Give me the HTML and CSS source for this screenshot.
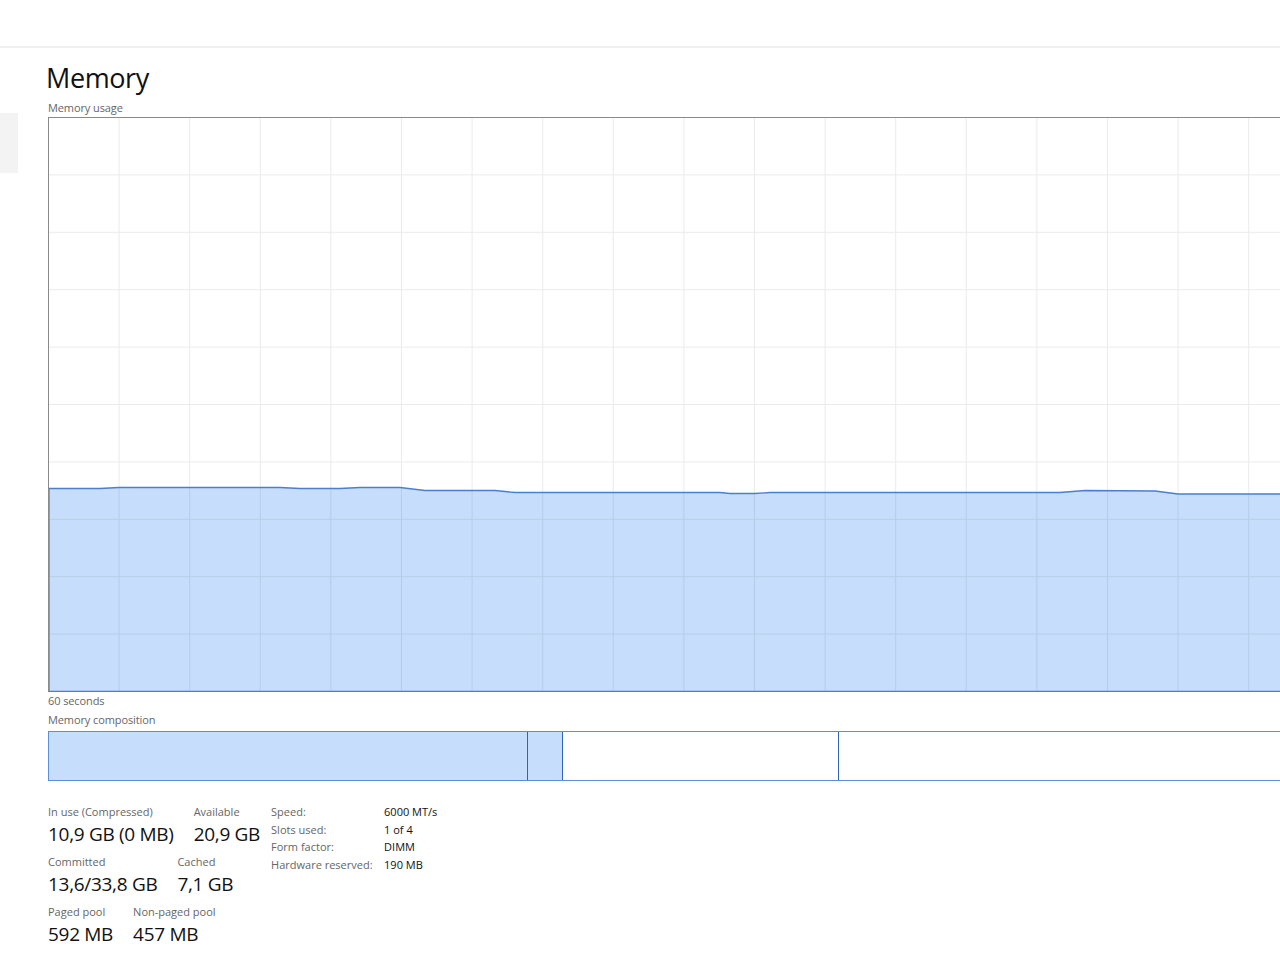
FILE: index.html
```html
<!DOCTYPE html>
<html lang="en">
<head>
    <meta charset="UTF-8">
    <title>Task Manager - Memory</title>
    <link rel="stylesheet" href="styles.css">
</head>
<body>
    <div class="titlebar"></div>

    <div class="layout">
        <!-- Barra lateral -->
        <div class="sidebar">
            <div class="side-item"></div>
        </div>

        <!-- Panel de memoria -->
        <div class="panel">
            <h1>Memory</h1>
            <div class="caption">Memory usage</div>

            <div class="chart">
                <svg width="1231" height="574" viewBox="0 0 1231 574">
                    <defs>
                        <pattern id="grid" x="0" y="0" width="70.6" height="57.4" patternUnits="userSpaceOnUse">
                            <path d="M70.1 0V57.4M0 56.9H70.6" fill="none" stroke="rgba(0,0,0,0.08)" stroke-width="1"/>
                        </pattern>
                    </defs>
                    <path class="area" d="M0 574V370.5L51 370.5L70 369.5L231 369.5L251 370.5L291 370.5L311 369.5L351 369.5L376 372.5L446 372.5L466 374.5L671 374.5L681 375.5L706 375.5L721 374.5L1011 374.5L1036 372.5L1106 373L1129 376L1231 376V574Z"/>
                    <rect width="1231" height="574" fill="url(#grid)"/>
                    <path class="line" d="M0 574V370.5L51 370.5L70 369.5L231 369.5L251 370.5L291 370.5L311 369.5L351 369.5L376 372.5L446 372.5L466 374.5L671 374.5L681 375.5L706 375.5L721 374.5L1011 374.5L1036 372.5L1106 373L1129 376L1231 376"/>
                    <path class="line" d="M0 573.5H1231"/>
                </svg>
            </div>
            <div class="caption small-gap">60 seconds</div>
            <div class="caption">Memory composition</div>

            <div class="composition">
                <div class="seg seg-inuse"></div>
                <div class="seg seg-modified"></div>
                <div class="seg seg-standby"></div>
                <div class="seg seg-free"></div>
            </div>

            <div class="stats">
                <div class="stat-cols">
                    <div class="stat-row">
                        <div class="stat">
                            <div class="stat-label">In use (Compressed)</div>
                            <div class="stat-value">10,9 GB (0 MB)</div>
                        </div>
                        <div class="stat">
                            <div class="stat-label">Available</div>
                            <div class="stat-value">20,9 GB</div>
                        </div>
                    </div>
                    <div class="stat-row">
                        <div class="stat">
                            <div class="stat-label">Committed</div>
                            <div class="stat-value">13,6/33,8 GB</div>
                        </div>
                        <div class="stat">
                            <div class="stat-label">Cached</div>
                            <div class="stat-value">7,1 GB</div>
                        </div>
                    </div>
                    <div class="stat-row">
                        <div class="stat">
                            <div class="stat-label">Paged pool</div>
                            <div class="stat-value">592 MB</div>
                        </div>
                        <div class="stat">
                            <div class="stat-label">Non-paged pool</div>
                            <div class="stat-value">457 MB</div>
                        </div>
                    </div>
                </div>

                <div class="specs">
                    <div class="spec-key">Speed:</div><div class="spec-val">6000 MT/s</div>
                    <div class="spec-key">Slots used:</div><div class="spec-val">1 of 4</div>
                    <div class="spec-key">Form factor:</div><div class="spec-val">DIMM</div>
                    <div class="spec-key">Hardware reserved:</div><div class="spec-val">190 MB</div>
                </div>
            </div>
        </div>
    </div>
</body>
</html>
```

FILE: styles.css
```css
body {
    margin: 0;
    background-color: #fff;
    font-family: "Open Sans", "Noto Sans", sans-serif;
    color: #000;
    overflow: hidden;
    width: 1280px;
    height: 960px;
}

.titlebar {
    height: 46px;
    border-bottom: 2px solid #f0f0f0;
}

.layout {
    display: flex;
}

.sidebar {
    width: 18px;
    flex-shrink: 0;
}

.side-item {
    margin-top: 65px;
    height: 60px;
    background-color: #f3f3f3;
}

.panel {
    padding-left: 30px;
    min-width: 0;
    width: 1232px;
}

h1 {
    margin: 14px 0 6px -2px;
    font-size: 27px;
    font-weight: 400;
    line-height: 32px;
    letter-spacing: -0.4px;
    color: #111;
}

.caption {
    font-size: 11px;
    line-height: 15px;
    color: #666;
    letter-spacing: -0.1px;
}

.small-gap {
    margin-top: 1px;
    margin-bottom: 4px;
}

.chart {
    width: 1231px;
    height: 574px;
    border-top: 1px solid #8a8a8a;
    border-left: 1px solid #8a8a8a;
    margin-top: 2px;
}

.chart svg {
    display: block;
}

.area {
    fill: #c6defb;
}

.line {
    fill: none;
    stroke: #4a7fd0;
    stroke-width: 1.3;
}

.composition {
    display: flex;
    width: 1231px;
    height: 48px;
    margin-top: 4px;
    border: 1px solid #5a8fdc;
    border-right: none;
}

.seg {
    height: 100%;
    border-right: 1px solid #2e63b5;
}

.seg-inuse {
    width: 478px;
    background-color: #c6defb;
}

.seg-modified {
    width: 34px;
    background-color: #c6defb;
}

.seg-standby {
    width: 275px;
}

.seg-free {
    flex: 1;
    border-right: none;
}

.stats {
    display: flex;
    margin-top: 23px;
}

.stat-cols {
    display: flex;
    flex-direction: column;
    gap: 6px;
}

.stat-row {
    display: flex;
    gap: 20px;
}

.stat-label {
    font-size: 11px;
    line-height: 16px;
    color: #666;
}

.stat-value {
    font-size: 19px;
    line-height: 28px;
    letter-spacing: -0.3px;
    color: #111;
}

.specs {
    display: grid;
    grid-template-columns: 113px auto;
    grid-auto-rows: 17.7px;
    margin-left: 11px;
    font-size: 11px;
    line-height: 16px;
}

.spec-key {
    color: #666;
}

.spec-val {
    color: #111;
}
```
